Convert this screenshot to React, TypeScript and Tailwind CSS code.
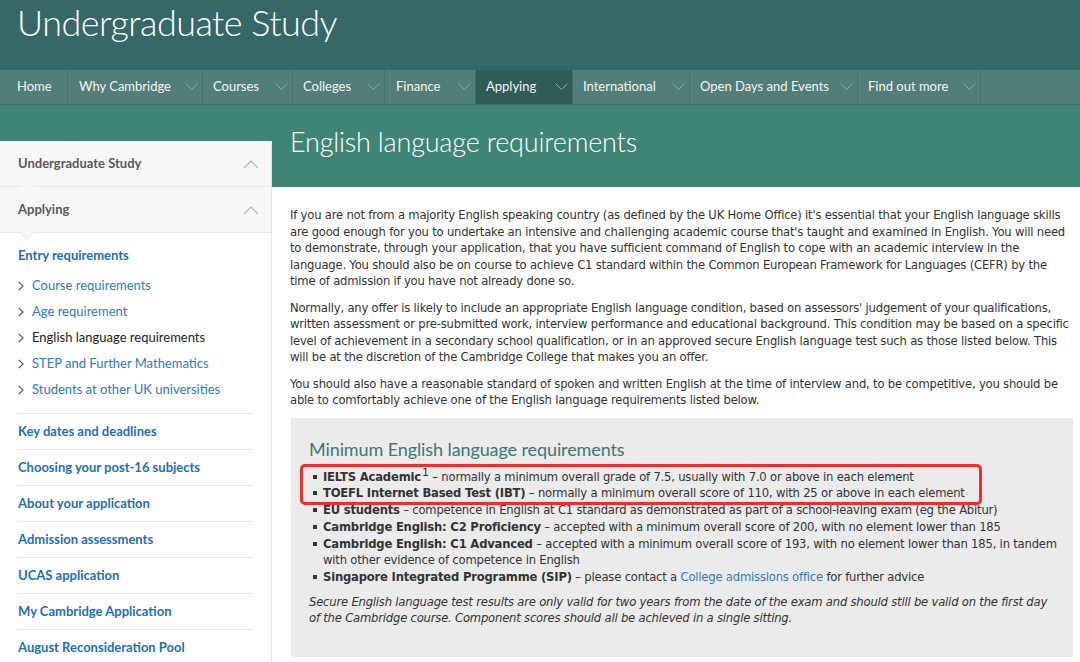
import React from "react";

const navItems: { label: string; w: number; chevron: boolean; active?: boolean; pl: number }[] = [
  { label: "Home", w: 68, chevron: false, pl: 17 },
  { label: "Why Cambridge", w: 135, chevron: true, pl: 11 },
  { label: "Courses", w: 90, chevron: true, pl: 10 },
  { label: "Colleges", w: 92, chevron: true, pl: 10 },
  { label: "Finance", w: 91, chevron: true, pl: 11 },
  { label: "Applying", w: 97, chevron: true, active: true, pl: 10 },
  { label: "International", w: 117, chevron: true, pl: 10 },
  { label: "Open Days and Events", w: 168, chevron: true, pl: 10 },
  { label: "Find out more", w: 123, chevron: true, pl: 10 },
];

function ChevDown() {
  return (
    <svg width="13" height="7" viewBox="0 0 13 7" className="absolute right-[4px] top-[13px]">
      <path d="M0.5 0.5 L6.5 6.5 L12.5 0.5" fill="none" stroke="#8aaca8" strokeWidth="1" />
    </svg>
  );
}

function ChevUp() {
  return (
    <svg width="16" height="9" viewBox="0 0 16 9">
      <path d="M1 8 L8 1 L15 8" fill="none" stroke="#b5b5b5" strokeWidth="1.2" />
    </svg>
  );
}

function ChevRight() {
  return (
    <svg width="6" height="10" viewBox="0 0 6 10" className="shrink-0">
      <path d="M0.8 0.8 L5 5 L0.8 9.2" fill="none" stroke="#555" strokeWidth="1.2" />
    </svg>
  );
}

const segoe = { fontFamily: "Lato, 'Open Sans', sans-serif" };
const verdana = { fontFamily: "'DejaVu Sans', Verdana, sans-serif" };

function Lines({ lines }: { lines: string[] }) {
  return (
    <>
      {lines.map((l, i) => (
        <span key={i} className="block whitespace-nowrap">
          {l}
        </span>
      ))}
    </>
  );
}

function Bullet() {
  return <span className="absolute left-[-10px] top-[6px] w-[4px] h-[4px] bg-[#333]" />;
}

export default function App() {
  return (
    <div className="w-[1080px] h-[662px] overflow-hidden bg-white" style={segoe}>
      {/* Header */}
      <div className="h-[70px] bg-[#366867] pl-[17px]">
        <div className="text-[36px] font-light text-white leading-[44px] tracking-[-0.55px]">
          Undergraduate Study
        </div>
      </div>
      {/* Nav */}
      <div className="h-[35px] bg-[#527e79] flex border-b border-[#46736e]">
        {navItems.map((n) => (
          <div
            key={n.label}
            className={`relative h-full flex items-center border-r border-[#44706b] text-[13px] text-[#f2f5f4] ${
              n.active ? "bg-[#2e5d56]" : ""
            }`}
            style={{ width: n.w, paddingLeft: n.pl }}
          >
            {n.label}
            {n.chevron && <ChevDown />}
          </div>
        ))}
      </div>
      <div className="flex">
        {/* Sidebar */}
        <div className="w-[272px] shrink-0">
          <div className="h-[36px] bg-[#3f8576]" />
          <div className="border-r border-[#e6e6e6] h-[600px]">
            <div className="relative h-[46px] bg-[#f7f7f7] border-b border-[#e8e8e8] flex items-center justify-between pl-[18px] pr-[12px] pt-[1px]">
              <span className="text-[13px] font-bold text-[#5a5a5a]">Undergraduate Study</span>
              <ChevUp />
              <div className="absolute left-[22px] bottom-[-6px] w-[10px] h-[10px] rotate-45 bg-[#f7f7f7] border-r border-b border-[#e8e8e8]" />
            </div>
            <div className="relative h-[46px] bg-[#f7f7f7] border-b border-[#e8e8e8] flex items-center justify-between pl-[18px] pr-[12px] pt-[1px]">
              <span className="text-[13px] font-bold text-[#5a5a5a]">Applying</span>
              <ChevUp />
              <div className="absolute left-[22px] bottom-[-6px] w-[10px] h-[10px] rotate-45 bg-[#f7f7f7] border-r border-b border-[#e8e8e8]" />
            </div>
            <div className="pl-[18px] pr-[18px]">
              <div className="pt-[13px] pb-[9px] text-[13px] font-bold text-[#1b6ec6] leading-[18px]">Entry requirements</div>
              <div className="pb-[10px]">
                {[
                  ["Course requirements", true],
                  ["Age requirement", true],
                  ["English language requirements", false],
                  ["STEP and Further Mathematics", true],
                  ["Students at other UK universities", true],
                ].map(([t, link]) => (
                  <div key={t as string} className="h-[26px] flex items-center gap-[8px]">
                    <ChevRight />
                    <span className={`text-[13px] ${link ? "text-[#2b7bd0]" : "text-[#222]"}`}>{t as string}</span>
                  </div>
                ))}
              </div>
              {[
                "Key dates and deadlines",
                "Choosing your post-16 subjects",
                "About your application",
                "Admission assessments",
                "UCAS application",
                "My Cambridge Application",
                "August Reconsideration Pool",
              ].map((t) => (
                <div key={t} className="h-[36px] border-t border-[#e6e6e6] flex items-center pt-[1px] text-[13px] font-bold text-[#1b6ec6]">
                  {t}
                </div>
              ))}
            </div>
          </div>
        </div>
        {/* Main */}
        <div className="flex-1">
          <div className="h-[82px] bg-[#3f8576] pl-[18px] pt-[21px]">
            <h1 className="text-[27px] font-light text-white leading-[32px] tracking-[-0.2px]">English language requirements</h1>
          </div>
          <div
            className="pl-[18px] pr-[7px] pt-[20px] text-[11.6px] leading-[16.5px] tracking-[-0.2px] text-[#333]"
            style={verdana}
          >
            <p className="mb-[10px]">
              <Lines
                lines={[
                  "If you are not from a majority English speaking country (as defined by the UK Home Office) it's essential that your English language skills",
                  "are good enough for you to undertake an intensive and challenging academic course that's taught and examined in English. You will need",
                  "to demonstrate, through your application, that you have sufficient command of English to cope with an academic interview in the",
                  "language. You should also be on course to achieve C1 standard within the Common European Framework for Languages (CEFR) by the",
                  "time of admission if you have not already done so.",
                ]}
              />
            </p>
            <p className="mb-[10px]">
              <Lines
                lines={[
                  "Normally, any offer is likely to include an appropriate English language condition, based on assessors' judgement of your qualifications,",
                  "written assessment or pre-submitted work, interview performance and educational background. This condition may be based on a specific",
                  "level of achievement in a secondary school qualification, or in an approved secure English language test such as those listed below. This",
                  "will be at the discretion of the Cambridge College that makes you an offer.",
                ]}
              />
            </p>
            <p className="mb-[9px]">
              <Lines
                lines={[
                  "You should also have a reasonable standard of spoken and written English at the time of interview and, to be competitive, you should be",
                  "able to comfortably achieve one of the English language requirements listed below.",
                ]}
              />
            </p>
            <div className="relative ml-[1px] bg-[#ebebeb] pl-[18px] pr-[10px] pt-[20px] pb-[30px]">
              <h2 className="text-[18px] leading-[22px] tracking-[-0.1px] text-[#3a7a73] mb-[9px]" style={segoe}>
                Minimum English language requirements
              </h2>
              <ul className="pl-[14px] leading-[16.75px]">
                <li className="relative whitespace-nowrap">
                  <Bullet />
                  <strong>IELTS Academic</strong>
                  <span className="relative top-[-5px] text-[11px] leading-none ml-[1px]">1</span> – normally a minimum
                  overall grade of 7.5, usually with 7.0 or above in each element
                </li>
                <li className="relative whitespace-nowrap">
                  <Bullet />
                  <strong>TOEFL Internet Based Test (IBT)</strong> – normally a minimum overall score of 110, with 25 or
                  above in each element
                </li>
                <li className="relative whitespace-nowrap">
                  <Bullet />
                  <strong>EU students</strong> – competence in English at C1 standard as demonstrated as part of a
                  school-leaving exam (eg the Abitur)
                </li>
                <li className="relative whitespace-nowrap">
                  <Bullet />
                  <strong>Cambridge English: C2 Proficiency</strong> – accepted with a minimum overall score of 200, with no
                  element lower than 185
                </li>
                <li className="relative">
                  <Bullet />
                  <span className="block whitespace-nowrap">
                    <strong>Cambridge English: C1 Advanced</strong> – accepted with a minimum overall score of 193, with no
                    element lower than 185, in tandem
                  </span>
                  <span className="block whitespace-nowrap">with other evidence of competence in English</span>
                </li>
                <li className="relative whitespace-nowrap">
                  <Bullet />
                  <strong>Singapore Integrated Programme (SIP)</strong> – please contact a{" "}
                  <span className="text-[#2b7bd0]">College admissions office</span> for further advice
                </li>
              </ul>
              <p className="italic mt-[8px]">
                <Lines
                  lines={[
                    "Secure English language test results are only valid for two years from the date of the exam and should still be valid on the first day",
                    "of the Cambridge course. Component scores should all be achieved in a single sitting.",
                  ]}
                />
              </p>
              <div className="absolute left-[9px] top-[46px] w-[682px] h-[41px] border-[3px] border-[#f52b2b] rounded-[5px] pointer-events-none" />
            </div>
          </div>
        </div>
      </div>
    </div>
  );
}
